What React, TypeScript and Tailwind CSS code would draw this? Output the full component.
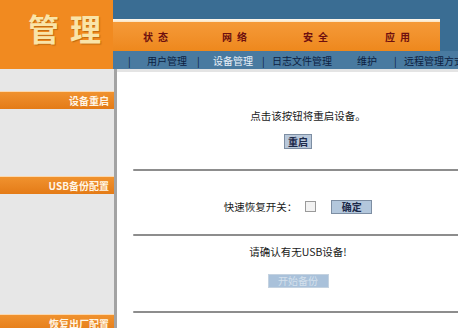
const cjk = "font-['Noto_Sans_CJK_SC','Noto_Sans',sans-serif]";

function Hr() {
  return <div className="h-[2px] w-[330px] rounded-full bg-[#8d8d8d]" />;
}

function SideBar({ label }: { label: string }) {
  return (
    <div className="h-[18px] border-t border-[#fbd9b0] bg-gradient-to-b from-[#f0922e] to-[#e47b16] pr-[5px] text-right text-[10px] font-bold leading-[17px] text-[#fff6e6]">
      {label}
    </div>
  );
}

export default function App() {
  return (
    <div className={`flex h-[328px] w-[458px] flex-col overflow-hidden bg-white ${cjk}`}>
      {/* header */}
      <div className="flex h-[69px] shrink-0">
        <div className="flex w-[113px] shrink-0 items-start bg-[#f18a20] pl-[28px] pt-[5px]">
          <span className="whitespace-nowrap text-[31px] font-bold tracking-[11px] text-[#f9e4a8] [text-shadow:1px_1px_1px_#c06a10]">
            管理
          </span>
        </div>
        <div className="flex min-w-0 flex-1 flex-col">
          <div className="h-[19px] bg-[#3a6d93]" />
          <div className="flex h-[32px]">
            <div className="flex min-w-0 flex-1 flex-col">
              <div className="h-[3px] bg-gradient-to-b from-[#fefaf2] to-[#fbe3c0]" />
              <div className="flex flex-1 items-center overflow-hidden whitespace-nowrap bg-gradient-to-b from-[#f59a38] to-[#ee881c] pl-[30px] text-[10px] font-bold tracking-[5px] text-[#6e0f0f]">
                <span className="w-[79px] shrink-0">状态</span>
                <span className="w-[81px] shrink-0">网络</span>
                <span className="w-[82px] shrink-0">安全</span>
                <span className="shrink-0">应用</span>
              </div>
            </div>
            <div className="w-[18px] shrink-0 bg-[#3a6d93]" />
          </div>
          <div className="flex h-[18px] items-center overflow-hidden whitespace-nowrap bg-[#497aa0] pl-[15px] text-[10px] text-[#0c2142]">
            <span className="w-[19px] shrink-0">|</span>
            <span className="w-[50px] shrink-0">用户管理</span>
            <span className="w-[16px] shrink-0">|</span>
            <span className="w-[49px] shrink-0 text-[#e8f0f8]">设备管理</span>
            <span className="w-[10px] shrink-0">|</span>
            <span className="w-[85px] shrink-0">日志文件管理</span>
            <span className="w-[37px] shrink-0">维护</span>
            <span className="w-[10px] shrink-0">|</span>
            <span className="shrink-0">远程管理方式</span>
          </div>
        </div>
      </div>

      {/* body */}
      <div className="flex flex-1">
        <div className="flex w-[117px] shrink-0 flex-col border-r-[3px] border-[#a3a3a3] bg-[#e7e7e7] pt-[22px]">
          <SideBar label="设备重启" />
          <div className="h-[67px]" />
          <SideBar label="USB备份配置" />
          <div className="h-[120px]" />
          <SideBar label="恢复出厂配置" />
        </div>

        <div className="flex flex-1 flex-col border-t-[3px] border-[#e4e4e4] pl-[16px] text-[10.5px] text-[#1a1a1a]">
          <div className="flex w-[330px] flex-col items-center pt-[36px]">
            <p className="pl-[20px]">点击该按钮将重启设备。</p>
            <button className="mt-[10px] h-[15px] border border-[#7d8ea3] bg-[#b9c8da] px-[3px] text-[10px] font-bold leading-[13px] text-[#1c2a4a]">
              重启
            </button>
          </div>
          <div className="mt-[20px]">
            <Hr />
          </div>
          <div className="flex w-[330px] items-center justify-center gap-[8px] pt-[28px]">
            <span>快速恢复开关：</span>
            <span className="h-[11px] w-[11px] border border-[#9a9a9a] bg-[#f2f2f2]" />
            <button className="ml-[7px] h-[14px] w-[41px] border border-[#7d8ea3] bg-[#b3c7dc] text-[10px] font-bold leading-[12px] text-[#1c2a4a]">
              确定
            </button>
          </div>
          <div className="mt-[19px]">
            <Hr />
          </div>
          <div className="flex w-[330px] flex-col items-center pt-[8px]">
            <p>请确认有无USB设备!</p>
            <button className="mt-[15px] h-[14px] w-[61px] border border-[#c4d2e0] bg-[#a9c1da] text-[10px] leading-[12px] text-[#d4e0ec]">
              开始备份
            </button>
          </div>
          <div className="mt-[23px]">
            <Hr />
          </div>
        </div>
      </div>
    </div>
  );
}
